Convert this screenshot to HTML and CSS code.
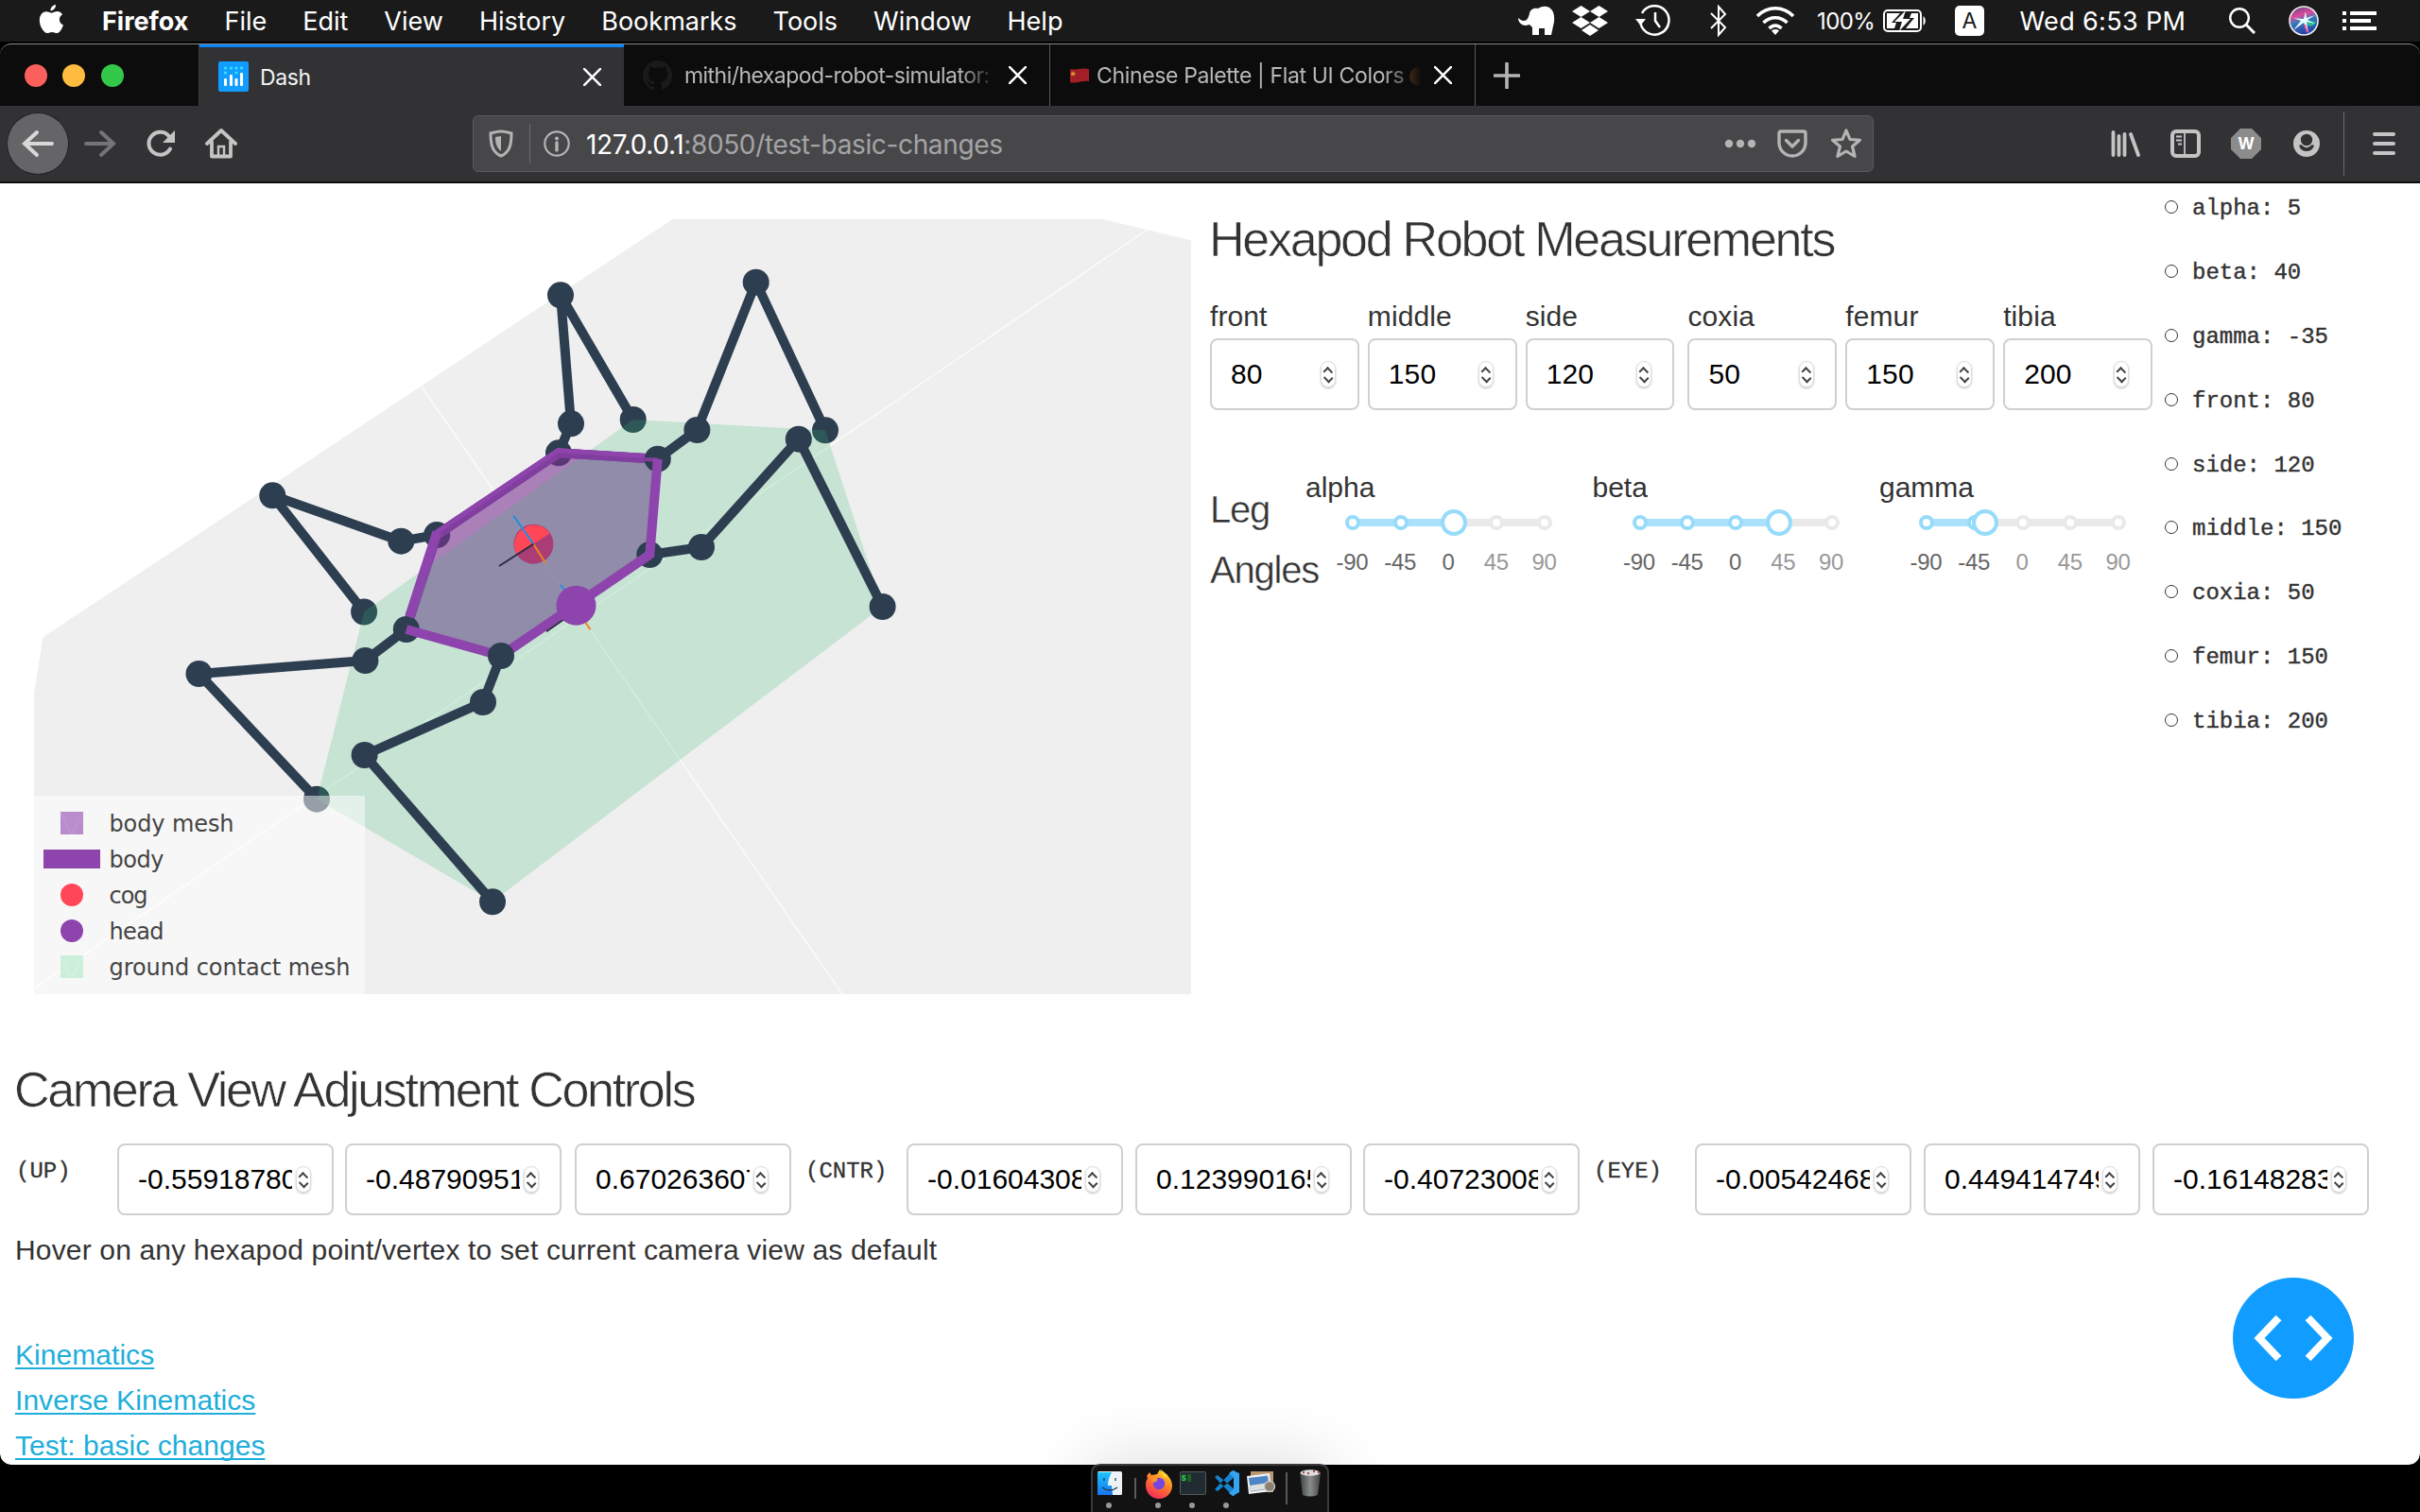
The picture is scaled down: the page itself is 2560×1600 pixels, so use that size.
FILE: index.html
```html
<!DOCTYPE html>
<html lang="en">
<head>
<meta charset="utf-8">
<title>Dash</title>
<link rel="stylesheet" href="styles.css">
</head>
<body>
<div class="desktop">
<header class="menubar">
  <svg class="apple" viewBox="0 0 26 32"><path d="M18 1c.3 3-2.4 6.400-5.500 6.300C12.200 4.300 15 1.200 18 1zM25 11.500c-2.200 1.400-3.200 3-3.100 5.300.1 2.700 1.600 4.600 4 5.600-1.200 3.900-3.900 8.600-6.900 8.600-1.900 0-2.600-1.100-5-1.100s-3.200 1.100-5 1.100C5.200 31 .8 23.800.8 17.300c0-5.800 3.600-9.100 7.300-9.100 2.300 0 4.200 1.500 5.600 1.500 1.300 0 3.500-1.600 6.200-1.600 1.600 0 3.700.8 5.100 3.400z" fill="#fff"/></svg>
  <nav class="menus"><b>Firefox</b><span>File</span><span>Edit</span><span>View</span><span>History</span><span>Bookmarks</span><span>Tools</span><span>Window</span><span>Help</span></nav>
  <div class="status">
    <svg class="s-elephant" width="40" height="32" viewBox="0 0 40 32"><path d="M1 13c0 4 3 8 8 8l4-1 3 3v8h7v-7h6v7h7l3-14C40 8 37 2 31 1c-4-1-7 1-9 2-3-1-8 0-9 5-1 5-3 8-6 8-3 0-4-2-6-3z" fill="#fff"/></svg>
    <svg class="s-dropbox" width="38" height="34" viewBox="0 0 38 34"><path d="M9.500 1l9.500 6-9.500 6L0 7zM28.500 1L38 7l-9.500 6L19 7zM9.500 13l9.500 6-9.500 6L0 19zM28.500 13l9.500 6-9.500 6-9.500-6zM19 21l9 6-9 6-9-6z" fill="#fff"/></svg>
    <svg class="s-time" width="38" height="34" viewBox="0 0 38 34" fill="none" stroke="#fff" stroke-width="2.500"><path d="M5.500 20A15.200 15.200 0 1 0 7 9"/><path d="M21 8v9l5 7"/><path d="M0 15h11l-5.500 7z" fill="#fff" stroke="none"/></svg>
    <svg class="s-bt" width="18" height="34" viewBox="0 0 18 34" fill="none" stroke="#fff" stroke-width="2"><path d="M1 9l15 15-7 8V2l7 8L1 25"/></svg>
    <svg class="s-wifi" width="42" height="32" viewBox="0 0 42 32" fill="none" stroke="#fff" stroke-width="3.600"><path d="M2 11c11-11 27-11 38 0M8.500 18c7-7 18-7 25 0M14.500 24c4-4 9-4 13 0"/><path d="M21 31l-4-4.500c2-2 6-2 8 0z" fill="#fff" stroke="none"/></svg>
    <span class="percent">100%</span>
    <svg class="s-batt" width="47" height="26" viewBox="0 0 47 26"><rect x="2" y="2" width="39" height="22" rx="4" fill="none" stroke="#fff" stroke-width="2"/><path d="M43.500 8c3 2 3 8 0 10z" fill="#fff"/><path d="M5 5h14l-9 10h5l-2 6H5zM31 5h7v16H25l9-11h-5z" fill="#fff"/><path d="M25 2L13 14h8l-3 10 12-13h-8z" fill="#fff"/></svg>
    <span class="input-source">A</span>
    <span class="clock">Wed 6:53 PM</span>
    <svg class="s-search" width="28" height="28" viewBox="0 0 28 28" fill="none" stroke="#fff" stroke-width="2.400"><circle cx="11" cy="11" r="9.800"/><path d="M18 18l9 9" stroke-width="3"/></svg>
    <svg class="s-siri" width="32" height="32" viewBox="0 0 32 32"><defs><linearGradient id="siri" x1=".3" y1="0" x2=".6" y2="1"><stop offset="0" stop-color="#6a4b8c"/><stop offset=".3" stop-color="#e0499a"/><stop offset=".5" stop-color="#3a7ab8"/><stop offset="1" stop-color="#2338a8"/></linearGradient></defs><circle cx="16" cy="16" r="15" fill="url(#siri)" stroke="#eee" stroke-width="1.600"/><path d="M15 15l14 2q-3 6-8 4z" fill="#1fc09a"/><path d="M16 14l2-8 1 7 9-3-8 5 8 4-9-2 2 12-5-11-11 8 8-10-8-3 9 1z" fill="#e8fbff"/><path d="M17 20l3 8" stroke="#ff5b9b" stroke-width="2"/></svg>
    <svg class="s-list" width="36" height="20" viewBox="0 0 36 20" fill="#fff"><path d="M0 0h4v4H0zM8 0h28v4H8zM0 8h4v4H0zM8 8h22v4H8zM0 16h4v4H0zM8 16h28v4H8z"/></svg>
  </div>
</header>

<main class="window">
  <div class="tabs">
    <div class="lights"><i class="red"></i><i class="yellow"></i><i class="green"></i></div>
    <div class="tab active">
      <svg width="32" height="32" viewBox="0 0 32 32"><rect width="32" height="32" rx="2" fill="#119dff"/><g fill="#fff"><rect x="6" y="18" width="3" height="8" rx="1"/><rect x="12" y="14" width="3" height="12" rx="1"/><rect x="17.500" y="18" width="3" height="8" rx="1"/><rect x="23" y="12" width="3" height="14" rx="1"/></g><g fill="#35e3ff"><circle cx="7.500" cy="7" r="1.600"/><circle cx="13.500" cy="7" r="1.600"/><circle cx="19" cy="7" r="1.600"/><circle cx="24.500" cy="7" r="1.600"/><circle cx="7.500" cy="12" r="1.600"/><circle cx="19" cy="12" r="1.600"/></g></svg>
      <span class="label">Dash</span>
      <svg class="close" viewBox="0 0 20 20"><path d="M1 1l18 18M19 1L1 19"/></svg>
    </div>
    <div class="tab second">
      <svg width="32" height="32" viewBox="0 0 16 16"><path fill="#1b1a1b" d="M8 0a8 8 0 0 0-2.500 15.600c.4.100.5-.2.500-.4v-1.500c-2.200.5-2.700-1-2.700-1-.4-.9-.9-1.200-.9-1.200-.7-.5.100-.5.100-.5.800.1 1.200.8 1.200.8.700 1.300 1.900.9 2.300.7.100-.5.300-.9.500-1.100-1.800-.2-3.600-.9-3.600-4 0-.9.300-1.600.8-2.100-.1-.2-.4-1 .1-2.100 0 0 .7-.2 2.200.8a7.600 7.600 0 0 1 4 0c1.500-1 2.200-.8 2.200-.8.400 1.100.2 1.900.1 2.100.5.600.8 1.300.8 2.100 0 3.100-1.900 3.700-3.700 3.900.3.300.6.800.6 1.500v2.200c0 .2.100.5.600.4A8 8 0 0 0 8 0z"/></svg>
      <span class="label fade">mithi/hexapod-robot-simulator:</span>
      <svg class="close" viewBox="0 0 20 20"><path d="M1 1l18 18M19 1L1 19"/></svg>
    </div>
    <div class="tab third">
      <svg width="22" height="16" viewBox="0 0 22 16"><path d="M1 1c6 2 13-2 20 0v13c-7-1-13 3-20 1z" fill="#a31f27"/><path d="M4 3l1 2 2 0-1.500 1.500.5 2L4 7.500 2 8.500l.5-2L1.500 5l2 0z" fill="#d9a02c"/></svg>
      <span class="label fade">Chinese Palette | Flat UI Colors <i class="palette"></i></span>
      <svg class="close" viewBox="0 0 20 20"><path d="M1 1l18 18M19 1L1 19"/></svg>
    </div>
    <svg class="plus" width="28" height="28" viewBox="0 0 28 28"><path d="M14 1v26M1 14h26" stroke="#b4b4b5" stroke-width="3.600" stroke-linecap="round"/></svg>
  </div>

  <div class="toolbar">
    <div class="nav">
      <span class="back"><svg width="34" height="32" viewBox="0 0 34 32"><path d="M32 16H3M16 4L3 16l13 12"/></svg></span>
      <span class="slot dim"><svg width="34" height="32" viewBox="0 0 34 32"><path d="M2 16h29M18 4l13 12-13 12"/></svg></span>
      <span class="slot"><svg width="34" height="32" viewBox="0 0 34 32"><path d="M27 21.500A12 12 0 1 1 26 8.500"/><path d="M32 2v13H19z" fill="#c4c4c5" stroke="none"/></svg></span>
      <span class="slot"><svg width="34" height="34" viewBox="0 0 34 34"><path d="M2 17L17 3l15 14M7 15v15.500h20V15" stroke-width="3.800" stroke-linejoin="round"/><path d="M14 30V20h6v10" stroke-width="2.500"/></svg></span>
    </div>
    <div class="urlbar">
      <svg width="26" height="30" viewBox="0 0 26 30"><path d="M13 2c4 0 7 1 11 2 0 10-1 20-11 24C3 24 2 14 2 4c4-1 7-2 11-2z" fill="none" stroke="#b4b4b5" stroke-width="3"/><path d="M13 7v16c-5-4-6-9-6-15z" fill="#b4b4b5"/></svg>
      <i class="bar"></i>
      <svg width="28" height="28" viewBox="0 0 28 28"><circle cx="14" cy="14" r="12.700" fill="none" stroke="#b4b4b5" stroke-width="2.200"/><circle cx="14" cy="8.500" r="2" fill="#b4b4b5"/><path d="M14 13v8" stroke="#b4b4b5" stroke-width="3.400" stroke-linecap="round"/></svg>
      <span class="url"><b>127.0.0.1</b>:8050/test-basic-changes</span>
      <svg class="dots" width="34" height="10" viewBox="0 0 34 10" fill="#b4b4b5"><circle cx="5" cy="5" r="4.200"/><circle cx="17" cy="5" r="4.200"/><circle cx="29" cy="5" r="4.200"/></svg>
      <svg class="pocket" width="32" height="30" viewBox="0 0 32 30" fill="none" stroke="#b4b4b5" stroke-width="3.400" stroke-linecap="round" stroke-linejoin="round"><path d="M4 2h24q2 0 2 2v10a14 14 0 0 1-28 0V4q0-2 2-2z"/><path d="M9.500 11.500l6.500 6.500 6.500-6.500"/></svg>
      <svg class="star" width="34" height="34" viewBox="0 0 34 34" fill="none" stroke="#b4b4b5" stroke-width="3.200" stroke-linejoin="round"><path d="M17 3l4 9.500 10.500.8-8 6.700 2.600 10.500L17 25l-9.100 5.500L10.500 20l-8-6.700 10.500-.8z"/></svg>
    </div>
    <div class="tools">
      <span class="slot"><svg width="32" height="30" viewBox="0 0 32 30"><path d="M3.500 3v24M9.500 7v20M15.500 5v22M22 5l8 22" stroke-width="3.800" stroke-linecap="round"/></svg></span>
      <span class="slot"><svg width="32" height="30" viewBox="0 0 32 30"><rect x="2" y="2" width="28" height="26" rx="4" stroke-width="4"/><path d="M15 2v26M6 7.500h6M6 11.500h6M8 15.500h4" stroke-width="1.800"/></svg></span>
      <span class="slot"><svg width="32" height="32" viewBox="0 0 32 32"><path d="M10 0h12l10 10v12L22 32H10L0 22V10z" fill="#8c8c8c" stroke="none"/><text x="16" y="22" class="wmark">W</text></svg></span>
      <span class="slot"><svg width="30" height="30" viewBox="0 0 30 30"><circle cx="15" cy="15" r="14" fill="#c4c4c5" stroke="none"/><circle cx="15" cy="11" r="6.200" fill="#323234" stroke="none"/><path d="M7 17q2-1.500 4 .5 4 3.500 8 0 2-2 4-.5-2 6-8 6t-8-6z" fill="#323234" stroke="none"/></svg></span>
      <i class="bar"></i>
      <svg class="burger" width="24" height="26" viewBox="0 0 24 26"><path d="M2 3h20M2 13h20M2 23h20" stroke-width="4" stroke-linecap="round"/></svg>
    </div>
  </div>

  <div class="page">
    <section class="top">
      <svg class="plot" width="1280" height="900" viewBox="0 194 1280 900">
        <path d="M36 1052V734L45.500 674.300 711.300 232H1166.300L1260 254.300V1052z" fill="#efefef"/>
        <path d="M446 409L891 1052M1212.600 243.700L36 1046" stroke="#fafafa" stroke-width="1.600"/>
        <g class="leg">
          <path d="M591 479.300L604 448.300 593 312.300 669.700 444"/>
          <path d="M462.200 566L424.300 572.700 288.300 524.300 385.100 647.500"/>
          <path d="M799.700 298.700L873 455.300"/>
          <circle cx="669.700" cy="444" r="14"/><circle cx="604" cy="448.300" r="14"/><circle cx="593" cy="312.300" r="14"/><circle cx="591" cy="479.300" r="14"/>
          <circle cx="288.300" cy="524.300" r="14"/><circle cx="424.300" cy="572.700" r="14"/><circle cx="462.200" cy="566" r="14"/><circle cx="385.100" cy="647.500" r="14"/>
          <circle cx="873" cy="455.300" r="14"/><circle cx="335" cy="845.700" r="14"/>
        </g>
        <path d="M429.800 666L462.200 566 591 479.300 695.800 485.700" class="edge"/>
        <path d="M462.200 566L591 479.300 695.800 485.700 687.300 587 530 694 429.800 666z" fill="rgba(121,54,146,.6)"/>
        <path d="M669.700 444L873 455.300 933.600 642 521 954.300 335 845.700 385.100 647.500z" fill="rgba(56,184,114,.215)"/>
        <path d="M462.200 566L591 479.300 695.800 485.700" class="edge shade"/>
        <path d="M462.200 566L591 479.300 695.800 485.700" class="edge shine"/>
        <g class="leg">
          <path d="M695.800 485.700L737.400 455 799.700 298.700"/>
          <path d="M687.300 587L742 579 844.800 464.700 933.600 642"/>
          <path d="M429.800 666L386.400 699 210.500 713 335 845.700"/>
          <circle cx="695.800" cy="485.700" r="14"/><circle cx="737.400" cy="455" r="14"/><circle cx="799.700" cy="298.700" r="14"/>
          <circle cx="687.300" cy="587" r="14"/><circle cx="742" cy="579" r="14"/><circle cx="844.800" cy="464.700" r="14"/><circle cx="933.600" cy="642" r="14"/>
          <circle cx="429.800" cy="666" r="14"/><circle cx="386.400" cy="699" r="14"/><circle cx="210.500" cy="713" r="14"/>
        </g>
        <path d="M696 484.500L682 484V488l14 1z" fill="#813e9e"/>
        <path d="M695.800 485.700L687.300 587 530 694 429.800 666" class="edge"/>
        <path d="M433 653L462.200 563" class="edge"/>
        <circle cx="564.400" cy="575.700" r="21" fill="#ab3d76"/>
        <path d="M546.800 587.100A21 21 0 0 1 582 564.300z" fill="#ff4757"/>
        <g fill="none" stroke-width="2">
          <path d="M543 545.700L564.400 575.700M593 619L600 628" stroke="#1f8fe8"/><path d="M564.400 575.700L577 595.700M616 654L624.600 666.300" stroke="#f0821a"/><path d="M564.400 575.700L528 599M600 653L578 668.300" stroke="#2d2c44"/>
        </g>
        <circle cx="609.500" cy="640.700" r="21" fill="#8e44ad"/>
        <g class="leg">
          <path d="M530 694L511 743 385.600 799 521 954.300"/>
          <circle cx="530" cy="694" r="14"/><circle cx="511" cy="743" r="14"/><circle cx="385.600" cy="799" r="14"/><circle cx="521" cy="954.300" r="14"/>
        </g>
        <rect x="36" y="842" width="350" height="210" fill="#fff" fill-opacity=".5"/>
        <rect x="64" y="859" width="24" height="24" fill="#b98ccd"/><path d="M64 859l12 24 12-24" stroke="#c39bd3" fill="none"/>
        <rect x="46" y="899" width="60" height="20" fill="#8e44ad"/>
        <circle cx="76" cy="947" r="12" fill="#ff4757"/><circle cx="76" cy="985" r="12" fill="#8e44ad"/>
        <rect x="64" y="1011" width="24" height="24" fill="#ccefdb"/><path d="M64 1011l12 24 12-24" stroke="#d6f5e3" fill="none"/>
        <g class="legend"><text x="115.500" y="880" textLength="132">body mesh</text><text x="115.500" y="918" textLength="58">body</text><text x="115.500" y="956" textLength="41">cog</text><text x="115.500" y="994" textLength="58">head</text><text x="115.500" y="1032" textLength="255">ground contact mesh</text></g>
      </svg>

      <div class="controls">
        <h2>Hexapod Robot Measurements</h2>
        <div class="dims">
          <label>front<span class="field">80<i class="spin"></i></span></label>
          <label>middle<span class="field">150<i class="spin"></i></span></label>
          <label>side<span class="field">120<i class="spin"></i></span></label>
          <label class="fourth">coxia<span class="field">50<i class="spin"></i></span></label>
          <label>femur<span class="field">150<i class="spin"></i></span></label>
          <label>tibia<span class="field">200<i class="spin"></i></span></label>
        </div>
        <div class="angles">
          <h4>Leg<br>Angles</h4>
          <div class="slider"><span>alpha</span>
            <div class="rail"><b style="width:107px"></b><i class="on"></i><i class="on"></i><i class="on"></i><i></i><i></i><em style="left:101px"></em></div>
            <div class="marks"><u class="on">-90</u><u class="on">-45</u><u class="on">0</u><u>45</u><u>90</u></div></div>
          <div class="slider"><span>beta</span>
            <div class="rail"><b style="width:148px"></b><i class="on"></i><i class="on"></i><i class="on"></i><i></i><i></i><em style="left:141px"></em></div>
            <div class="marks"><u class="on">-90</u><u class="on">-45</u><u class="on">0</u><u>45</u><u>90</u></div></div>
          <div class="slider"><span>gamma</span>
            <div class="rail"><b style="width:62px"></b><i class="on"></i><i class="on"></i><i></i><i></i><i></i><em style="left:56px"></em></div>
            <div class="marks"><u class="on">-90</u><u class="on">-45</u><u>0</u><u>45</u><u>90</u></div></div>
        </div>
      </div>

      <ul class="values"><li>alpha: 5</li><li>beta: 40</li><li>gamma: -35</li><li>front: 80</li><li>side: 120</li><li>middle: 150</li><li>coxia: 50</li><li>femur: 150</li><li>tibia: 200</li></ul>
    </section>

    <section class="camera">
      <h2>Camera View Adjustment Controls</h2>
      <div class="vectors">
        <code>(UP)</code><span class="field"><s>-0.559187802</s><i class="spin"></i></span><span class="field"><s>-0.487909511</s><i class="spin"></i></span><span class="field"><s>0.6702636072</s><i class="spin"></i></span>
        <code>(CNTR)</code><span class="field"><s>-0.016043086</s><i class="spin"></i></span><span class="field"><s>0.1239901653</s><i class="spin"></i></span><span class="field"><s>-0.407230086</s><i class="spin"></i></span>
        <code>(EYE)</code><span class="field"><s>-0.005424686</s><i class="spin"></i></span><span class="field"><s>0.4494147493</s><i class="spin"></i></span><span class="field"><s>-0.161482836</s><i class="spin"></i></span>
      </div>
      <p>Hover on any hexapod point/vertex to set current camera view as default</p>
      <div class="links"><a href="#">Kinematics</a><a href="#">Inverse Kinematics</a><a href="#">Test: basic changes</a></div>
    </section>
    <div class="dockshade"></div>
    <div class="debug"><svg width="128" height="128" viewBox="0 0 128 128"><path d="M48.500 42.500L28 64l20.500 21.500M79.500 42.500L100 64 79.500 85.500" fill="none" stroke="#fff" stroke-width="8"/></svg></div>
  </div>
</main>

<footer class="dock">
  <svg width="252" height="51" viewBox="1154 1549 252 51">
    <path d="M1155 1600V1559q0-9 9-9H1396q9 0 9 9V1600" fill="#121212" stroke="#3b3b3b" stroke-width="2"/>
    <defs><linearGradient id="fx" x1=".8" y1="0" x2=".3" y2="1"><stop offset="0" stop-color="#ffe226"/><stop offset=".5" stop-color="#ff7a26"/><stop offset="1" stop-color="#f5285d"/></linearGradient><linearGradient id="fd" x2="0" y2="1"><stop offset="0" stop-color="#1bc4fb"/><stop offset="1" stop-color="#1a74f0"/></linearGradient><linearGradient id="tr"><stop offset="0" stop-color="#3e4141"/><stop offset=".5" stop-color="#8a8d8d"/><stop offset="1" stop-color="#444"/></linearGradient></defs>
    <rect x="1161" y="1557" width="26" height="25" rx="1.500" fill="#edf2f8"/><path d="M1161 1558h15q-4 7-4 14h4l1 10h-16z" fill="url(#fd)"/><path d="M1168 1564v3M1180 1564v3M1166 1574q8 6 16 0" stroke="#223650" stroke-width="1.300" fill="none"/>
    <path d="M1201 1564v22M1361 1558v34" stroke="#5a5a5a" stroke-width="2"/>
    <path d="M1213 1562l3-4 2 3 6-1 3-5 4 6 3-1q6 6 6 12a14 14 0 0 1-28 0q0-5 2-8z" fill="url(#fx)"/><path d="M1228 1555q1 6 5 9l2-3z" fill="#ffd83a"/><circle cx="1226" cy="1570" r="6.200" fill="#7547df"/><path d="M1216 1563l8 1q2 3-4 5z" fill="#ff922b"/>
    <rect x="1248.500" y="1557.500" width="27" height="24" rx="1" fill="#222b31" stroke="#52595d"/><text x="1249.500" y="1567" class="prompt">$</text><rect x="1256" y="1560" width="4" height="8" fill="#15651f"/>
    <path d="M1285 1563l3-2 18 15v7l-3-1zM1285 1576l3 2 18-15v-7l-3 1z" fill="#1583cf"/><path d="M1304 1556l7 3v20l-7 4-4-3 5-4v-13l-5-4z" fill="#35a5f2"/>
    <rect x="1323" y="1557" width="24" height="22" fill="#b89873"/><path d="M1319 1562l24-3 2 19-24 3z" fill="#f1f1ef"/><path d="M1321 1564l20-2.500 2 14-20 3z" fill="#4c86c5"/><path d="M1322 1572l20-3 1 6-20 3z" fill="#dcdfdc"/><circle cx="1343" cy="1573" r="5.500" fill="#8c8072" stroke="#ccc" stroke-width="1.300"/>
    <path d="M1375 1558h22l-3 24q-8 3-16 0z" fill="url(#tr)"/><ellipse cx="1386" cy="1558.500" rx="10.500" ry="3.200" fill="#ddd"/><path d="M1378 1558h2m3 1h2m4-2h2m3 1h2" stroke="#a44" stroke-width="2"/>
    <g fill="#989898"><circle cx="1173" cy="1593" r="3"/><circle cx="1225" cy="1593" r="3"/><circle cx="1261" cy="1593" r="3"/><circle cx="1297" cy="1593" r="3"/></g>
  </svg>
</footer>
</div>
</body>
</html>
```
FILE: styles.css
```css
* { box-sizing: border-box; }
body { margin: 0; background: #000; font-family: "Liberation Sans", Arial, sans-serif; }
.desktop { width: 2560px; height: 1600px; overflow: hidden; background: #000; position: relative; }
svg { display: block; flex: none; }

.menubar { height: 44px; background: #1a1a1a; display: flex; align-items: center; color: #fff; font: 27px Inter, sans-serif; padding-left: 41px; }
.apple { width: 26px; height: 32px; margin-top: -4px; }
.menus { display: flex; gap: 38px; margin-left: 41px; white-space: nowrap; }
.status { margin-left: auto; padding-right: 46px; display: flex; align-items: center; white-space: nowrap; }
.s-dropbox { margin-left: 18px; }
.s-time { margin-left: 29px; }
.s-bt { margin-left: 41px; }
.s-wifi { margin-left: 30px; }
.percent { margin-left: 23px; width: 61px; font-size: 24px; letter-spacing: -.6px; }
.s-batt { margin-left: 8px; }
.input-source { margin-left: 30px; width: 31px; height: 32px; border-radius: 5px; background: #fff; color: #1a1a1a; font-size: 23px; line-height: 32px; text-align: center; }
.clock { margin-left: 37.500px; width: 175.500px; letter-spacing: .35px; }
.s-search { margin-left: 46px; }
.s-siri { margin-left: 35px; }
.s-list { margin-left: 25px; }

.window { margin-top: 2px; height: 1504px; border-radius: 12px; overflow: hidden; background: #0c0c0c; border-top: 1px solid #8b8b8b; display: flex; flex-direction: column; }
.tabs { height: 65px; flex: none; display: flex; align-items: stretch; color: #b9b9ba; font: 23px Inter, sans-serif; }
.lights { width: 211px; display: flex; align-items: center; gap: 16.500px; padding-left: 25.500px; border-right: 1px solid #3a3a3c; }
.lights i { width: 24px; height: 24px; border-radius: 50%; }
.red { background: #fc605c; }
.yellow { background: #fdbc40; }
.green { background: #34c84a; }
.tab { display: flex; align-items: center; width: 451px; padding: 0 24px 0 20px; border-right: 1.500px solid #59595a; }
.tab.active { width: 449px; background: #323234; color: #f4f4f5; border-top: 3px solid #0a84ff; border-right: 0; }
.tab.third { width: 450px; }
.label { flex: 1; margin-left: 12px; margin-right: 13px; white-space: nowrap; overflow: hidden; line-height: 32px; padding-top: 1px; }
.active .label { letter-spacing: -.4px; }
.second .label { letter-spacing: -.55px; }
.third .label { margin-left: 7px; letter-spacing: -.35px; }
.fade { -webkit-mask-image: linear-gradient(90deg, #000 88%, transparent); mask-image: linear-gradient(90deg, #000 88%, transparent); }
.palette { display: inline-block; width: 12px; height: 20px; border-radius: 10px 0 0 10px; background: #a8652c; vertical-align: -3px; }
.close { width: 19px; height: 19px; fill: none; stroke: #fff; stroke-width: 2.600; stroke-linecap: round; }
.plus { align-self: center; margin-left: 19px; }

.toolbar { height: 82px; flex: none; background: #323234; border-bottom: 2px solid #0c0c0d; display: flex; align-items: center; }
.nav, .tools { display: flex; align-items: center; fill: none; stroke: #c4c4c5; stroke-width: 4; }
.nav path { stroke-linecap: round; }
.back { width: 64px; height: 64px; border-radius: 50%; background: #656567; box-shadow: 0 0 0 1px #232325; display: grid; place-items: center; stroke: #d8d8d8; }
.nav { width: 500px; padding-left: 8px; }
.slot { width: 64px; display: grid; place-items: center; }
.nav .slot:nth-child(2) { margin-left: 2px; }
.dim { stroke: #757577; }
.urlbar { width: 1482px; height: 60px; border: 1.500px solid #5b5b5d; border-radius: 6px; background: #474749; display: flex; align-items: center; padding: 0 11px 0 16px; }
.bar { width: 1px; height: 42px; background: #6d6d6f; margin: 0 14px 0 17px; }
.url { margin-left: 17px; padding-top: 2px; flex: 1; font: 28px Inter, sans-serif; letter-spacing: -.36px; color: #a4a4a5; white-space: nowrap; }
.url b { font-weight: 400; color: #fff; }
.pocket { margin-left: 22px; }
.star { margin-left: 24px; }
.tools { margin-left: 234px; }
.tools .bar { height: 68px; margin: 0 0 0 7px; }
.burger { margin-left: 30px; }
.wmark { font: bold 17px Inter, sans-serif; fill: #fff; stroke: none; text-anchor: middle; }

.page { height: 1356px; background: #fff; color: #333; position: relative; border-radius: 0 0 12px 12px; overflow: hidden; }
.top { display: flex; height: 900px; }
.leg { fill: #2c3e50; }
.leg path { fill: none; stroke: #2c3e50; stroke-width: 10; stroke-linejoin: round; }
.edge { fill: none; stroke: #8e44ad; stroke-width: 10; }
.shade { stroke: #813e9e; }
.shine { stroke-width: 5; transform: translate(-1px, -2.500px); }
.legend { font: 24px "DejaVu Sans", Verdana, sans-serif; fill: #444; }
.prompt { font: bold 9px "Liberation Mono", monospace; fill: #2fd84a; }
h2, h4, p, ul { margin: 0; font-weight: 400; }
h2 { font-size: 52px; line-height: 62px; letter-spacing: -2.250px; white-space: nowrap; -webkit-text-stroke: .6px #fff; }
.controls { width: 997px; padding-top: 28px; flex: none; }
.controls h2 { margin-left: -1px; }
.dims { display: flex; gap: 9px; margin-top: 33px; }
.dims label { font-size: 30px; line-height: 36px; width: 158px; letter-spacing: .1px; }
.dims .fourth { margin-left: 5px; }
.field { display: flex; align-items: center; justify-content: space-between; height: 76px; border: 2px solid #d0d0d0; border-radius: 8px; background: #fff; color: #000; font-size: 30px; padding: 0 22.500px 0 20px; }
.dims .field { margin-top: 5px; }
.field s { text-decoration: none; width: 163px; overflow: hidden; line-height: 40px; }
.spin { width: 16px; height: 28px; border-radius: 8px; border: 1px solid #ddd; box-shadow: 0 1px 2px #bbb; flex: none; display: flex; flex-direction: column; align-items: center; justify-content: space-between; padding: 7px 0 6px; }
.spin::before, .spin::after { content: ""; width: 6px; height: 6px; border: solid #444; border-width: 2px 0 0 2px; transform: rotate(45deg); }
.spin::after { transform: rotate(225deg); }
.angles { display: flex; margin-top: 64px; }
h4 { width: 101px; white-space: nowrap; font-size: 40px; line-height: 64px; letter-spacing: -1.200px; padding-top: 9px; -webkit-text-stroke: .4px #fff; }
.slider { width: 303.500px; flex: none; font-size: 30px; line-height: 36px; }
.rail { position: relative; width: 219px; height: 28px; margin: 5px 0 0 42px; display: flex; justify-content: space-between; align-items: center; background: linear-gradient(#e9e9e9, #e9e9e9) center / 203px 8px no-repeat; }
.rail b { position: absolute; left: 8px; top: 10px; height: 8px; background: #abe2fb; }
.rail i { position: relative; width: 16px; height: 16px; border: 4px solid #e9e9e9; background: #fff; border-radius: 50%; }
.rail .on { border-color: #96dbfa; }
.rail em { position: absolute; top: 0; width: 28px; height: 28px; border: 4px solid #96dbfa; border-radius: 50%; background: #fff; }
.marks { display: flex; width: 255px; margin: 10px 0 0 24px; }
.marks u { text-decoration: none; width: 50.800px; text-align: center; font-size: 24px; color: #999; letter-spacing: -.3px; }
.marks .on { color: #666; }
.values { padding: 0; width: 283px; list-style: none; font: 24px/67.900px "Liberation Mono", monospace; margin-top: -7px; -webkit-text-stroke: .4px #333; }
.values li { display: flex; align-items: center; height: 67.900px; }
.values li::before { content: ""; width: 12px; height: 12px; border: 1px solid #333; border-radius: 50%; margin: -4px 15px 0 13px; }
.camera { padding: 0 0 0 15px; }
.camera h2 { margin-top: 28px; letter-spacing: -2.310px; }
.vectors { display: grid; grid-template-columns: 109px 241px 243px 242px 109px 242px 241px 242px 109px 242px 242px 230px; margin-top: 26px; }
.vectors .field { width: 229px; }
.vectors code { font: 24px/28px "Liberation Mono", monospace; padding: 16px 0 0 2px; -webkit-text-stroke: .3px #333; }
.camera p { font-size: 30px; line-height: 48px; margin: 13px 0 0 1px; letter-spacing: .16px; white-space: nowrap; }
.links { display: flex; flex-direction: column; align-items: flex-start; margin: 63px 0 0 1px; font-size: 30px; line-height: 48px; letter-spacing: .05px; }
.links a { color: #1eaedb; text-decoration-thickness: 2px; text-underline-offset: 3px; text-decoration-skip-ink: none; }
.debug { position: absolute; left: 2362px; top: 1158px; width: 128px; height: 128px; border-radius: 50%; background: #119dff; }
.dockshade { position: absolute; left: 1154px; top: 1356px; width: 252px; height: 51px; box-shadow: 0 0 70px rgba(0,0,0,.17); }
.dock { position: absolute; left: 1154px; top: 1549px; }
```
